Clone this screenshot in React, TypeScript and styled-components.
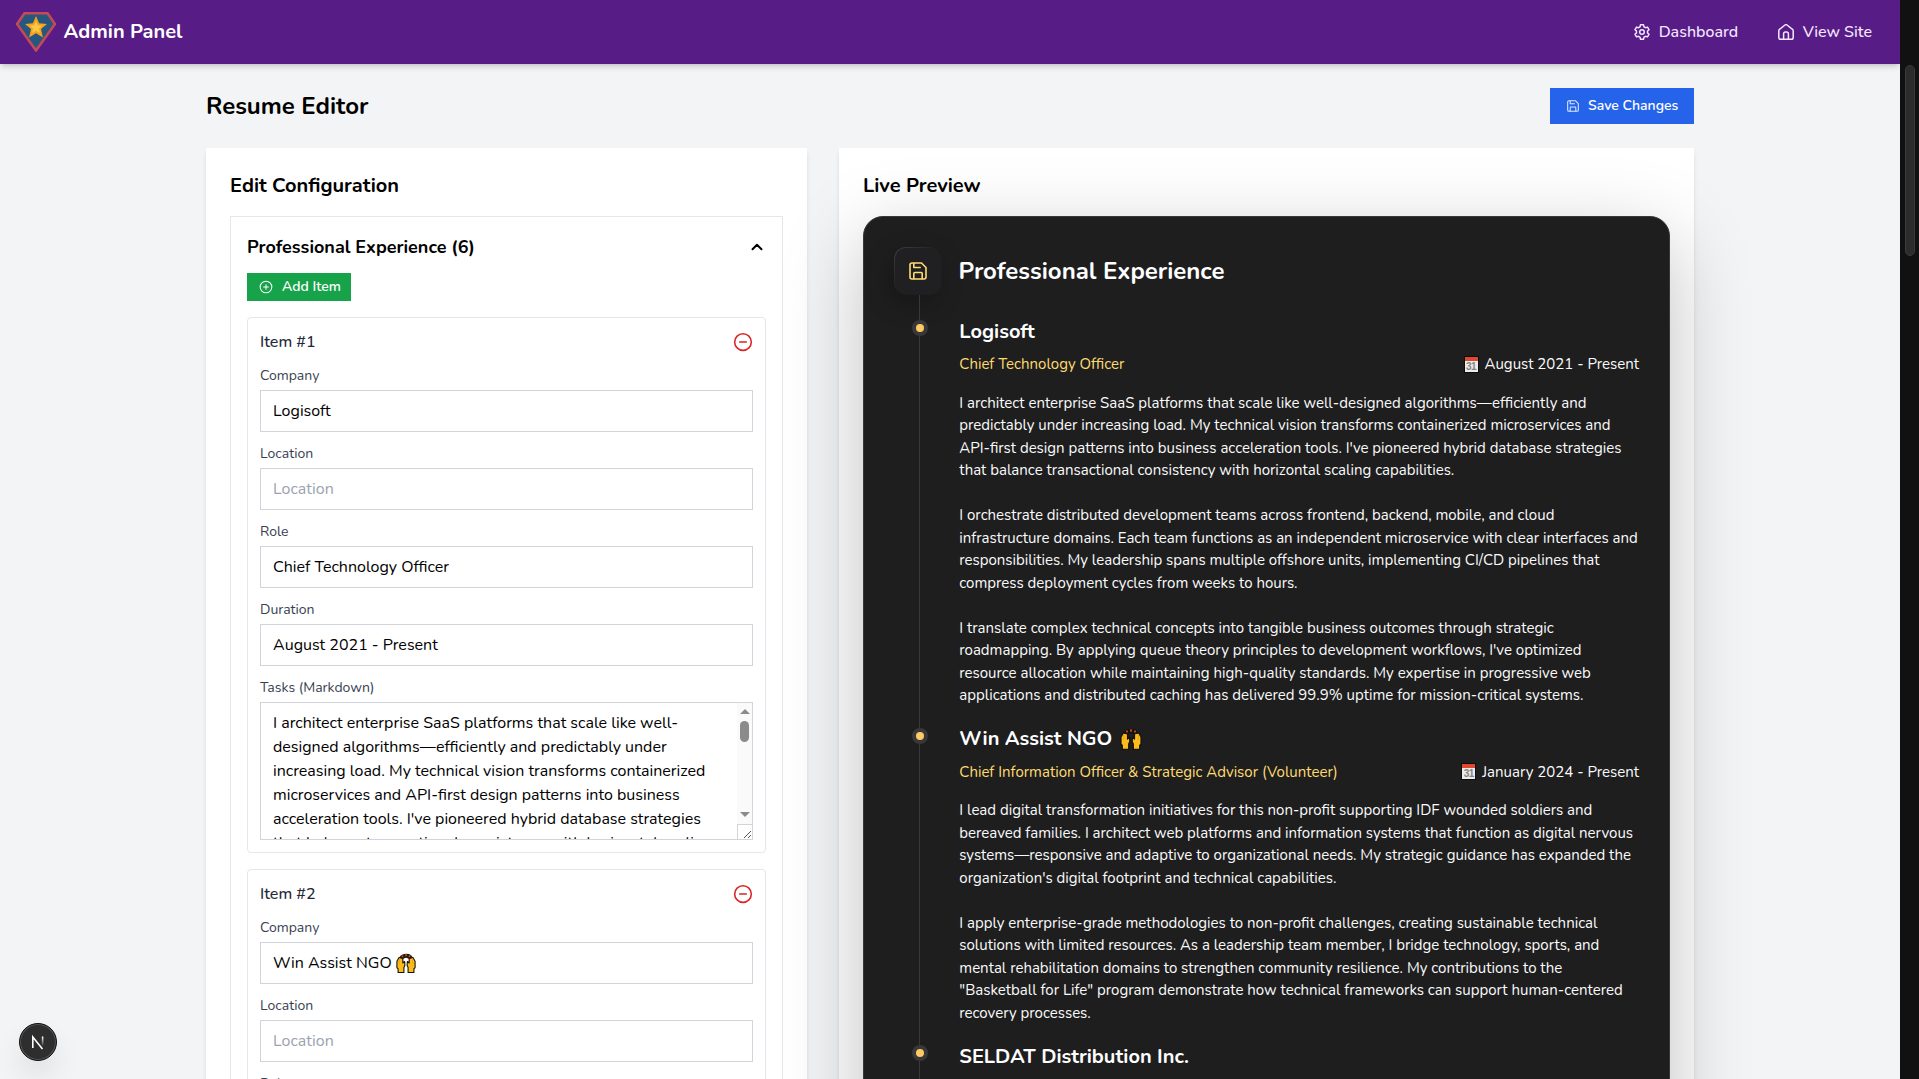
import React from "react";
import styled, { createGlobalStyle, css } from "styled-components";
import { ChevronUp, CircleMinus, CirclePlus } from "lucide-react";

const Global = createGlobalStyle`
  *, *::before, *::after { box-sizing: border-box; }
  html, body { margin: 0; height: 1079px; overflow: hidden; background: #f3f4f6; }
  body { font-family: Nunito, Lato, "Open Sans", sans-serif; font-size: 16px; line-height: 24px; color: #000; }
  h1, h2, h3, h4, p { margin: 0; font: inherit; }
`;

const Window = styled.div`
  display: flex;
  width: 1919px;
  height: 1079px;
  overflow: hidden;
`;
const Page = styled.div`
  position: relative;
  flex: 0 0 1900px;
  height: 1079px;
  overflow: hidden;
`;
const PageScrollbar = styled.div`
  flex: 1;
  background: #111112;
  padding: 65px 4px 0 5px;
`;
const PageThumb = styled.div`
  height: 191px;
  border-radius: 5px;
  background: #2c2c2c;
  border: 1px solid #3a3a3a;
`;
const Header = styled.header`
  position: relative;
  display: flex;
  align-items: center;
  justify-content: space-between;
  height: 64px;
  padding: 0 28px 0 16px;
  background: #581c87;
  color: #fff;
  box-shadow: 0 4px 6px -1px rgba(0, 0, 0, 0.14), 0 2px 4px -2px rgba(0, 0, 0, 0.12);
`;
const Brand = styled.div`
  display: flex;
  align-items: center;
  gap: 7.5px;
  font-size: 20px;
  font-weight: 700;
`;
const Nav = styled.nav`
  display: flex;
  gap: 40px;
`;
const NavLink = styled.a`
  display: flex;
  align-items: center;
  gap: 8.600px;
  font-weight: 500;
  color: #f3e8ff;
`;
const Main = styled.main`
  width: 1536px;
  margin: 0 auto;
  padding: 24px;
`;
const TitleRow = styled.div`
  display: flex;
  justify-content: space-between;
  align-items: center;
  height: 36px;
  margin-bottom: 24px;
`;
const PageTitle = styled.h1`
  && { font-size: 24px; line-height: 32px; font-weight: 700; }
`;
const SaveButton = styled.button`
  display: flex;
  align-items: center;
  gap: 9px;
  width: 144px;
  height: 36px;
  padding: 0 0 0 17px;
  border: 0;
  background: #2563eb;
  color: #fff;
  font: 600 14px/20px Nunito, Lato, sans-serif;
  white-space: nowrap;
`;
const Columns = styled.div`
  display: grid;
  grid-template-columns: 601px 855px;
  gap: 32px;
`;
const Card = styled.section`
  height: 1400px;
  padding: 24px;
  background: #fff;
  box-shadow: 0 4px 6px -1px rgba(0, 0, 0, 0.1), 0 2px 4px -2px rgba(0, 0, 0, 0.1);
`;
const CardTitle = styled.h2`
  && { font-size: 20px; line-height: 28px; font-weight: 700; margin-bottom: 16px; }
`;
const Group = styled.div`
  height: 1300px;
  padding: 16px;
  border: 1px solid #e5e7eb;
`;
const GroupHead = styled.div`
  display: flex;
  justify-content: space-between;
  align-items: center;
  height: 28px;
  margin-bottom: 12px;
  font-size: 18px;
  font-weight: 700;
`;
const AddButton = styled.button`
  display: flex;
  align-items: center;
  gap: 9px;
  width: 104px;
  height: 28px;
  padding: 0 0 0 12px;
  border: 0;
  background: #16a34a;
  color: #fff;
  font: 600 14px/20px Nunito, Lato, sans-serif;
  white-space: nowrap;
`;
const Item = styled.div`
  display: flex;
  flex-direction: column;
  gap: 12px;
  margin-top: 16px;
  padding: 12px;
  border: 1px solid #e5e7eb;
  border-radius: 4px;
`;
const ItemHead = styled.div`
  display: flex;
  justify-content: space-between;
  align-items: center;
  height: 24px;
  font-weight: 500;
  color: #1f2937;
`;
const Field = styled.div`
  display: flex;
  flex-direction: column;
  gap: 4px;
`;
const Label = styled.div`
  height: 20px;
  font-size: 14px;
  line-height: 20px;
  color: #374151;
`;
const Box = styled.div<{ $empty?: boolean }>`
  display: flex;
  align-items: center;
  gap: 4px;
  height: 42px;
  padding: 0 12px;
  border: 1px solid #d1d5db;
  color: ${(p) => (p.$empty ? "#9ca3af" : "#000")};
`;
const TextArea = styled.div`
  display: flex;
  height: 138px;
  border: 1px solid #d1d5db;
  overflow: hidden;
`;
const TextBody = styled.div`
  flex: 1;
  height: 136px;
  padding: 8px 12px;
  overflow: hidden;
`;
const TextLine = styled.div`
  height: 24px;
  white-space: pre;
`;
const AreaScrollbar = styled.div`
  display: flex;
  flex-direction: column;
  align-items: center;
  width: 15px;
  height: 136px;
  background: #fafafa;
`;
const Arrow = styled.div<{ $down?: boolean }>`
  width: 0;
  height: 0;
  border: 5px solid transparent;
  ${(p) =>
    p.$down
      ? css`border-top: 5px solid #8b8b8b; border-bottom: 0; margin-top: auto; margin-bottom: 7px;`
      : css`border-bottom: 5px solid #8b8b8b; border-top: 0; margin-top: 6px; margin-bottom: 7px;`}
`;
const AreaThumb = styled.div`
  width: 9px;
  height: 21px;
  border-radius: 5px;
  background: #8b8b8b;
`;
const Grip = styled.div`
  width: 15px;
  height: 15px;
  border-top: 1px solid #d1d5db;
  border-left: 1px solid #d1d5db;
  background: #fff;
  line-height: 0;
`;

const Preview = styled.article`
  height: 1300px;
  padding: 30px;
  border: 1px solid #383838;
  border-radius: 20px;
  background: #1e1e1f;
  color: #fafafa;
  box-shadow: 0 24px 80px rgba(0, 0, 0, 0.25);
`;
const PreviewHead = styled.div`
  display: flex;
  align-items: center;
  gap: 16.500px;
  height: 48px;
  margin-bottom: 21px;
  font-size: 24px;
  font-weight: 700;
  line-height: 36px;
  color: #fff;
`;
const IconBox = styled.div`
  display: flex;
  align-items: center;
  justify-content: center;
  width: 48px;
  height: 48px;
  border: 1px solid transparent;
  border-radius: 12px;
  background: linear-gradient(#202022, #202022) padding-box,
    linear-gradient(to bottom right, #404040 0%, rgba(64, 64, 64, 0) 50%) border-box, #1e1e1f;
  box-shadow: -4px 8px 24px rgba(0, 0, 0, 0.25);
`;
const Entry = styled.div`
  position: relative;
  padding: 0 0 17.2px 65.3px;
`;
const Rail = styled.i<{ $first?: boolean }>`
  position: absolute;
  left: 25px;
  top: ${(p) => (p.$first ? "-21px" : "0")};
  bottom: 0;
  width: 1px;
  background: #383838;
`;
const Dot = styled.i`
  position: absolute;
  left: 18px;
  top: 4px;
  width: 16px;
  height: 16px;
  border: 4px solid #383838;
  border-radius: 50%;
  background: #ffc966;
`;
const Company = styled.h4`
  && {
    display: flex;
    align-items: center;
    gap: 8px;
    height: 30px;
    padding-top: 1px;
    font-size: 20px;
    line-height: 30px;
    font-weight: 700;
    color: #fff;
  }
`;
const Meta = styled.div`
  display: flex;
  justify-content: space-between;
  height: 24px;
  margin: 6px 0 15.5px;
  font-size: 15px;
`;
const Role = styled.span`
  color: #ffdb70;
`;
const When = styled.span`
  display: flex;
  align-items: center;
  gap: 6px;
`;
const Para = styled.p`
  && { font-size: 15px; line-height: 22.5px; }
  & + & { margin-top: 22.5px; }
`;
const ParaLine = styled.span`
  display: block;
  height: 22.5px;
  white-space: pre;
`;
const Badge = styled.div`
  position: absolute;
  left: 19px;
  top: 1023px;
  width: 38px;
  height: 38px;
  border-radius: 50%;
  background: #2e2e2e;
  border: 1px solid #111;
  box-shadow: inset 0 0 0 1px #575757, 0 16px 32px -8px rgba(0, 0, 0, 0.24);
`;

const Logo = () => (
  <svg width="40" height="40" viewBox="0 0 40 40">
    <path d="M8.5 1.2h23L39 12 20 38.6 1 12z" fill="#27567f" stroke="#c34a56" strokeWidth="2.6" strokeLinejoin="round" />
    <path d="M20 4l3.1 7.2 7.9.7-6 5.2 1.9 8.3L20 21.2l-6.900 4.200 1.900-8.300-6-5.200 7.900-.7z" fill="#f2a31f" />
    <path d="M20 9.200l1.900 4 4.200.5-3.100 2.900.9 4.400-3.900-2.300-3.900 2.300.9-4.400-3.100-2.900 4.200-.5z" fill="#fdc944" />
  </svg>
);
const GearIcon = () => (
  <svg width="16" height="16" viewBox="0 0 16 16" fill="none" stroke="currentColor" strokeWidth="1.45" strokeLinejoin="round">
    <path d="M6.500.8h3l.5 2 1.500.9 2-.6 1.500 2.600-1.500 1.400v1.800l1.500 1.400-1.500 2.600-2-.6-1.500.9-.5 2h-3l-.5-2-1.500-.9-2 .6L1 10.300l1.500-1.400V7.100L1 5.700l1.500-2.600 2 .6L6 2.800z" />
    <circle cx="8" cy="8" r="2.300" />
  </svg>
);
const HomeIcon = () => (
  <svg width="16" height="16" viewBox="0 0 16 16" fill="none" stroke="currentColor" strokeWidth="1.500" strokeLinejoin="round">
    <path d="M.8 6.800c0-.6.300-1.100.7-1.500L7 1a1.600 1.600 0 0 1 2 0l5.500 4.300c.4.400.7.900.7 1.500v6.600a1.800 1.800 0 0 1-1.800 1.800H2.600A1.800 1.800 0 0 1 .8 13.400z" />
    <path d="M5.600 15V9.700A1.700 1.700 0 0 1 7.300 8h1.400a1.700 1.700 0 0 1 1.700 1.700V15" />
  </svg>
);
const SaveIcon = ({ size, color }: { size: number; color: string }) => (
  <svg width={size} height={size} viewBox="0 0 18 18" fill="none" stroke={color} strokeWidth="1.600" strokeLinejoin="round">
    <path d="M1 3a2 2 0 0 1 2-2h9.500L17 5.500V15a2 2 0 0 1-2 2H3a2 2 0 0 1-2-2z" />
    <path d="M4.800 1v4.500h7M4.800 17v-5.500a1 1 0 0 1 1-1h6.400a1 1 0 0 1 1 1V17" />
  </svg>
);
const Hands = ({ size, bold }: { size: number; bold?: boolean }) => (
  <svg width={size} height={size} viewBox="0 0 22 22">
    <path d="M3 7Q4 1 11 .8T19 7l-3 1Q11 2.500 6 8z" fill={bold ? "#15110d" : "#2a1710"} />
    <path d="M6.500 2.600l1 1.800M11 1.300v2.400M15.500 2.600l-1 1.800" stroke="#d9541e" strokeWidth="1.600" />
    <path d="M3.300 5L1 9v7l1.300 1.500v3.900h6.400V16l1.100-2.500-.3-4.200-2 1.700V6zM18.700 5L21 9v7l-1.300 1.500v3.900h-6.400V16l-1.100-2.500.3-4.200 2 1.700V6z" fill="#fbbc1c" stroke="#17120a" strokeWidth="1.200" strokeLinejoin="round" />
    <path d="M3.700 6v6M18.300 6v6" stroke="#e59a13" strokeWidth=".8" />
  </svg>
);
const CalendarGlyph = styled.span`
  display: flex;
  flex-direction: column;
  align-items: center;
  width: 15px;
  height: 17px;
  border: 1px solid #0c0c0c;
  background: linear-gradient(#e0492f 0 4px, #ececec 4px);
  padding-top: 4px;
  font: 700 10px/11px "Liberation Sans", sans-serif;
  letter-spacing: -0.5px;
  color: #858585;
`;

const TASKS = [
  "I architect enterprise SaaS platforms that scale like well-",
  "designed algorithms—efficiently and predictably under",
  "increasing load. My technical vision transforms containerized",
  "microservices and API-first design patterns into business",
  "acceleration tools. I've pioneered hybrid database strategies",
  "that balance transactional consistency with horizontal scaling",
];

const ENTRIES: { company: string; hands?: boolean; role?: string; when?: string; paras: string[][] }[] = [
  {
    company: "Logisoft",
    role: "Chief Technology Officer",
    when: "August 2021 - Present",
    paras: [
      [
        "I architect enterprise SaaS platforms that scale like well-designed algorithms—efficiently and",
        "predictably under increasing load. My technical vision transforms containerized microservices and",
        "API-first design patterns into business acceleration tools. I've pioneered hybrid database strategies",
        "that balance transactional consistency with horizontal scaling capabilities.",
      ],
      [
        "I orchestrate distributed development teams across frontend, backend, mobile, and cloud",
        "infrastructure domains. Each team functions as an independent microservice with clear interfaces and",
        "responsibilities. My leadership spans multiple offshore units, implementing CI/CD pipelines that",
        "compress deployment cycles from weeks to hours.",
      ],
      [
        "I translate complex technical concepts into tangible business outcomes through strategic",
        "roadmapping. By applying queue theory principles to development workflows, I've optimized",
        "resource allocation while maintaining high-quality standards. My expertise in progressive web",
        "applications and distributed caching has delivered 99.9% uptime for mission-critical systems.",
      ],
    ],
  },
  {
    company: "Win Assist NGO",
    hands: true,
    role: "Chief Information Officer & Strategic Advisor (Volunteer)",
    when: "January 2024 - Present",
    paras: [
      [
        "I lead digital transformation initiatives for this non-profit supporting IDF wounded soldiers and",
        "bereaved families. I architect web platforms and information systems that function as digital nervous",
        "systems—responsive and adaptive to organizational needs. My strategic guidance has expanded the",
        "organization's digital footprint and technical capabilities.",
      ],
      [
        "I apply enterprise-grade methodologies to non-profit challenges, creating sustainable technical",
        "solutions with limited resources. As a leadership team member, I bridge technology, sports, and",
        "mental rehabilitation domains to strengthen community resilience. My contributions to the",
        "\"Basketball for Life\" program demonstrate how technical frameworks can support human-centered",
        "recovery processes.",
      ],
    ],
  },
  { company: "SELDAT Distribution Inc.", paras: [] },
];

function TextField({ label, value, empty, hands }: { label: string; value?: string; empty?: boolean; hands?: boolean }) {
  return (
    <Field>
      <Label>{label}</Label>
      <Box $empty={empty}>
        {value}
        {hands && <Hands size={20} />}
      </Box>
    </Field>
  );
}

export default function App() {
  return (
    <Window>
      <Global />
      <Page>
        <Header>
          <Brand><Logo />Admin Panel</Brand>
          <Nav>
            <NavLink><GearIcon />Dashboard</NavLink>
            <NavLink><HomeIcon />View Site</NavLink>
          </Nav>
        </Header>
        <Main>
          <TitleRow>
            <PageTitle>Resume Editor</PageTitle>
            <SaveButton><SaveIcon size={12} color="#dbeafe" />Save Changes</SaveButton>
          </TitleRow>
          <Columns>
            <Card>
              <CardTitle>Edit Configuration</CardTitle>
              <Group>
                <GroupHead>Professional Experience (6)<ChevronUp size={18} strokeWidth={2.600} /></GroupHead>
                <AddButton><CirclePlus size={14} strokeWidth={1.800} />Add Item</AddButton>
                <Item>
                  <ItemHead>Item #1<CircleMinus size={20} color="#dc2626" strokeWidth={1.900} /></ItemHead>
                  <TextField label="Company" value="Logisoft" />
                  <TextField label="Location" value="Location" empty />
                  <TextField label="Role" value="Chief Technology Officer" />
                  <TextField label="Duration" value="August 2021 - Present" />
                  <Field>
                    <Label>Tasks (Markdown)</Label>
                    <TextArea>
                      <TextBody>
                        {TASKS.map((t) => <TextLine key={t}>{t}</TextLine>)}
                      </TextBody>
                      <AreaScrollbar>
                        <Arrow />
                        <AreaThumb />
                        <Arrow $down />
                        <Grip>
                          <svg width="14" height="14" viewBox="0 0 14 14" stroke="#555" strokeWidth="1">
                            <path d="M6 13l7-7M10 13l3-3" />
                          </svg>
                        </Grip>
                      </AreaScrollbar>
                    </TextArea>
                  </Field>
                </Item>
                <Item>
                  <ItemHead>Item #2<CircleMinus size={20} color="#dc2626" strokeWidth={1.900} /></ItemHead>
                  <TextField label="Company" value="Win Assist NGO" hands />
                  <TextField label="Location" value="Location" empty />
                  <TextField label="Role" />
                </Item>
              </Group>
            </Card>
            <Card>
              <CardTitle>Live Preview</CardTitle>
              <Preview>
                <PreviewHead>
                  <IconBox><SaveIcon size={18} color="#ffdb70" /></IconBox>
                  Professional Experience
                </PreviewHead>
                {ENTRIES.map((e, i) => (
                  <Entry key={e.company}>
                    <Rail $first={i === 0} />
                    <Dot />
                    <Company>{e.company}{e.hands && <Hands size={22} bold />}</Company>
                    {e.role && (
                      <Meta>
                        <Role>{e.role}</Role>
                        <When><CalendarGlyph>31</CalendarGlyph>{e.when}</When>
                      </Meta>
                    )}
                    {e.paras.map((p) => (
                      <Para key={p[0]}>
                        {p.map((t) => <ParaLine key={t}>{t}</ParaLine>)}
                      </Para>
                    ))}
                  </Entry>
                ))}
              </Preview>
            </Card>
          </Columns>
        </Main>
        <Badge>
          <svg width="36" height="36" viewBox="0 0 36 36" fill="none" strokeWidth="1.600">
            <defs>
              <linearGradient id="fade" x1="0" y1="0" x2="0" y2="1">
                <stop offset="0" stopColor="#fff" />
                <stop offset="1" stopColor="#fff" stopOpacity=".1" />
              </linearGradient>
            </defs>
            <path d="M12.800 24V13l9.700 12" stroke="#fff" />
            <rect x="21.800" y="12.500" width="1.600" height="9" fill="url(#fade)" />
          </svg>
        </Badge>
      </Page>
      <PageScrollbar><PageThumb /></PageScrollbar>
    </Window>
  );
}
